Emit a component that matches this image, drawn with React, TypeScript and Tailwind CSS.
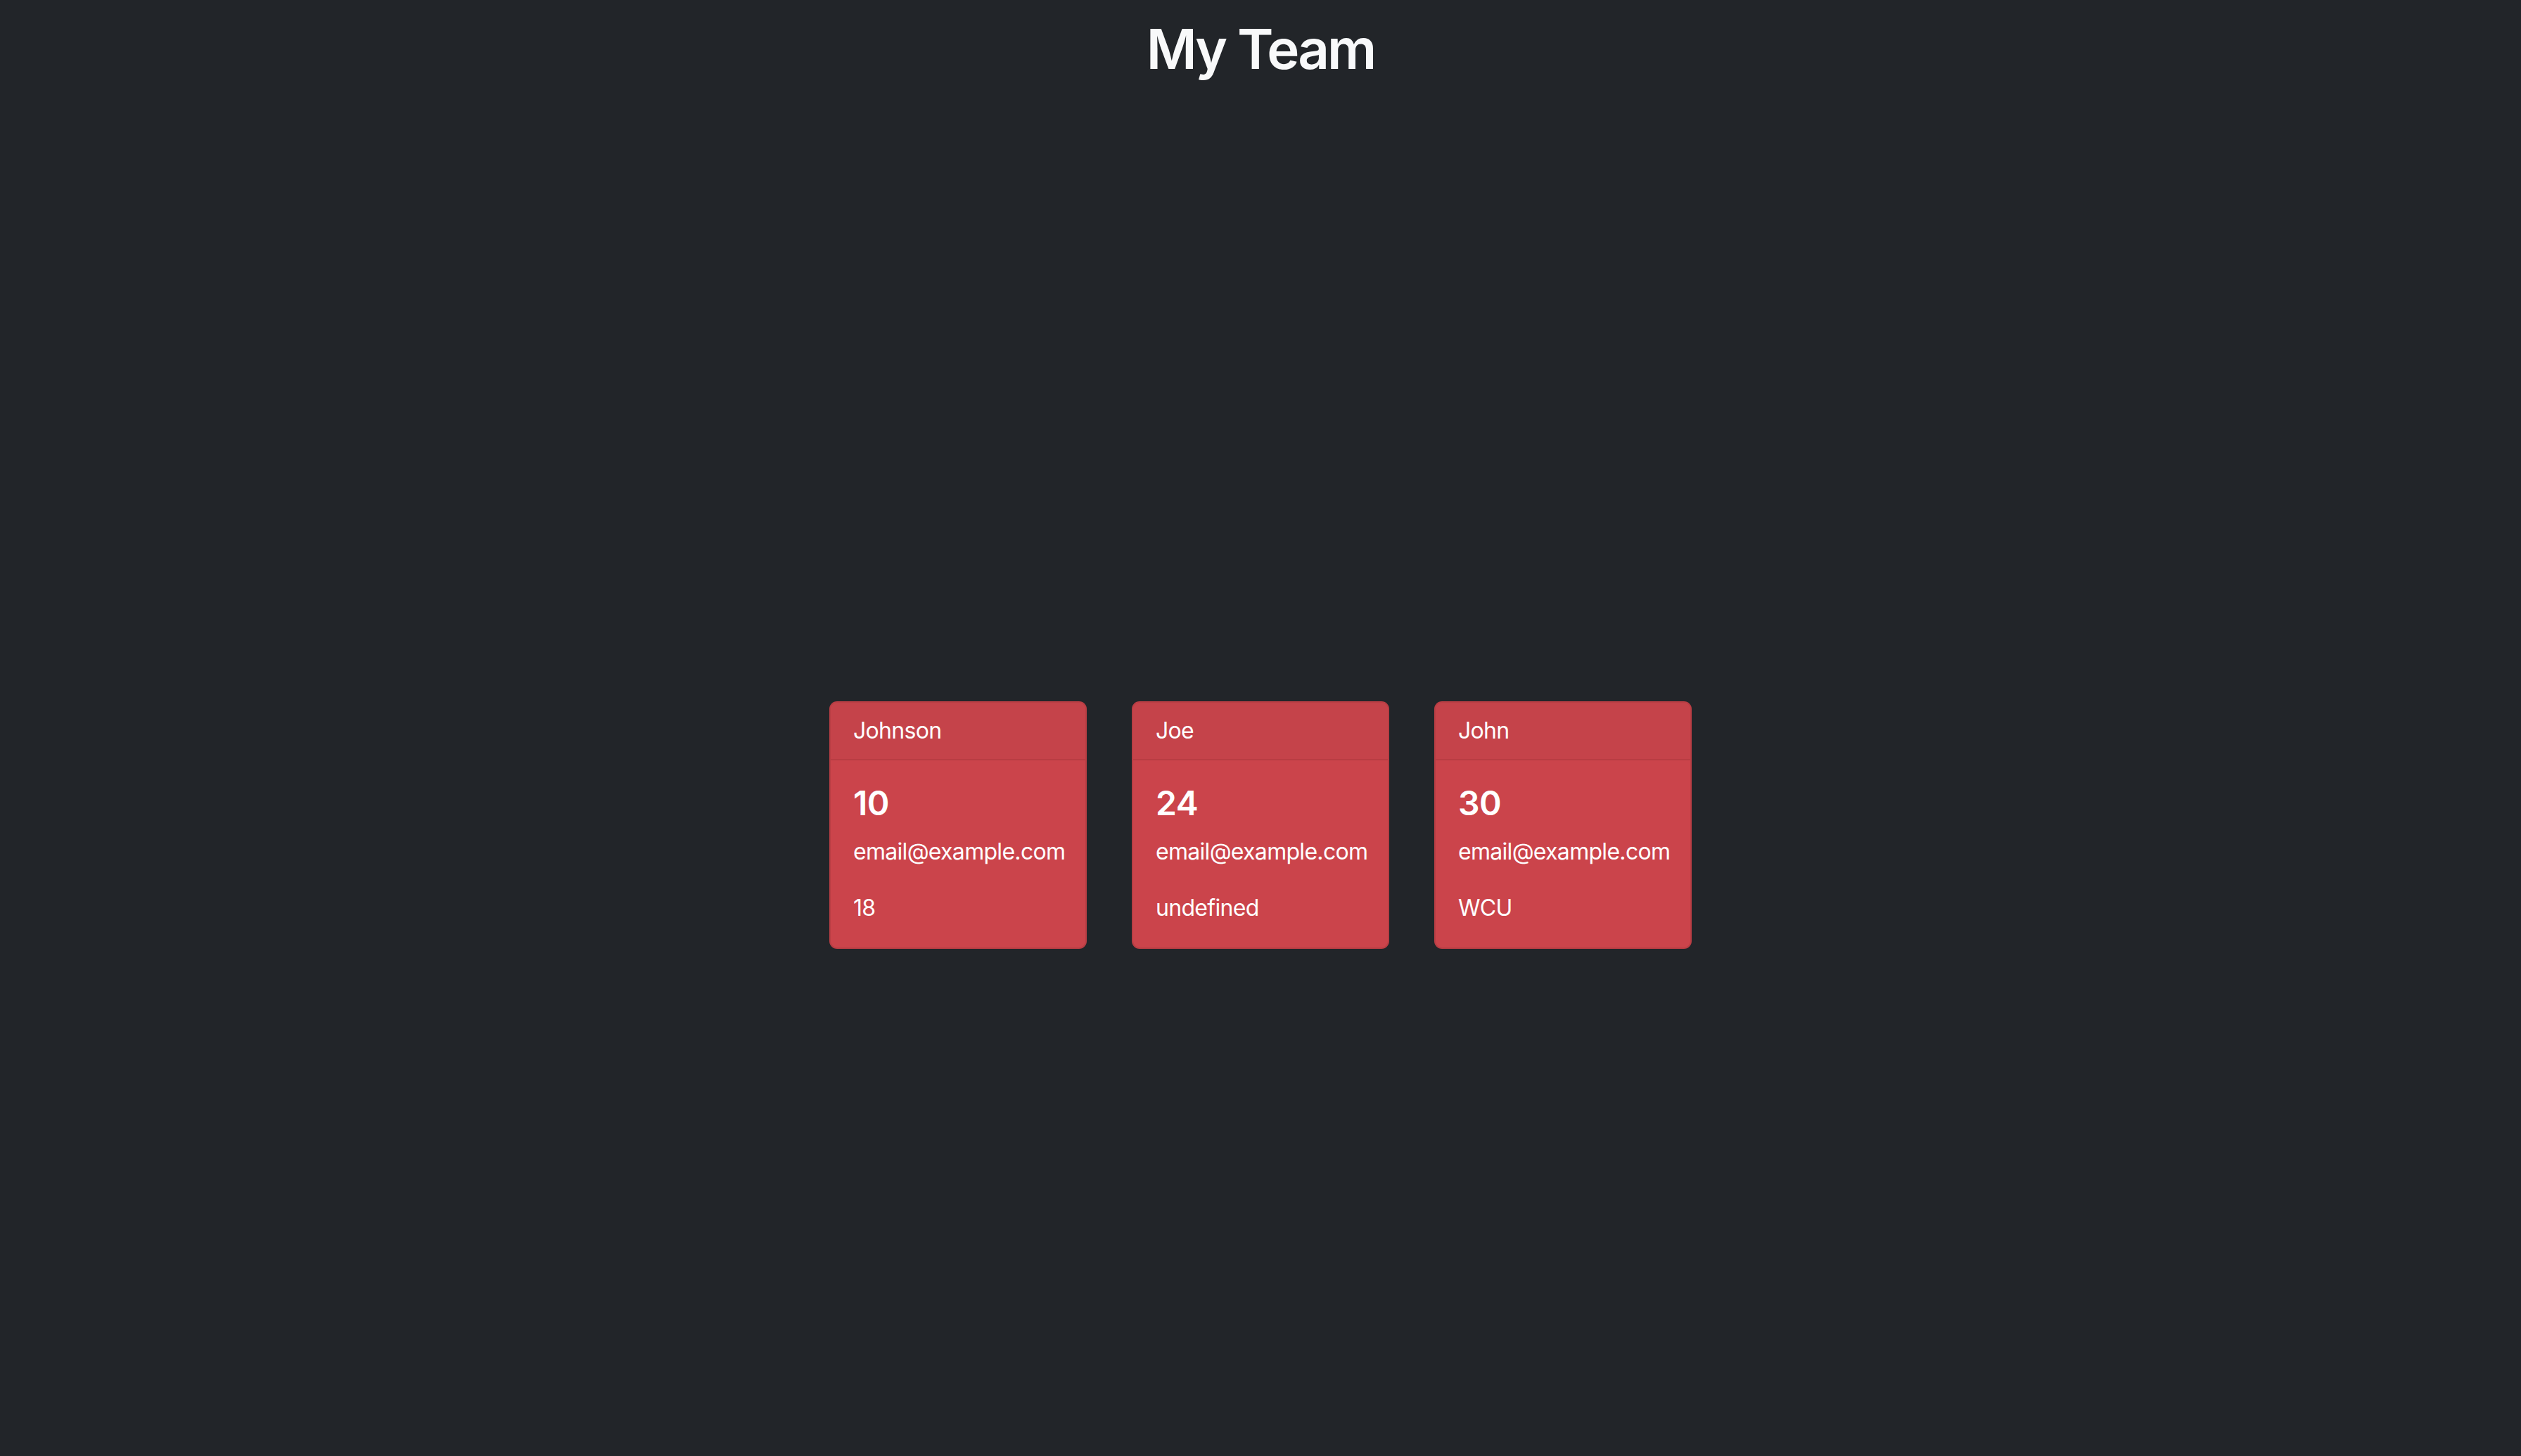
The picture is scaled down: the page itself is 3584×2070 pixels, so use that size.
const TEAM = [
  { id: 1, name: 'Johnson', number: 10, email: 'email@example.com', extra: '18' },
  { id: 2, name: 'Joe', number: 24, email: 'email@example.com', extra: 'undefined' },
  { id: 3, name: 'John', number: 30, email: 'email@example.com', extra: 'WCU' },
]

function MemberCard({ name, number, email, extra }: { name: string; number: number; email: string; extra: string }) {
  return (
    <div className="w-[366px] rounded-[11px] border-2 border-[#b93e44] bg-[#cb444b] text-white overflow-hidden tracking-[-0.7px]">
      <div className="px-[32px] py-[16px] bg-[#c5434a] border-b-2 border-[#b83d43] text-[32px] leading-[48px]">{name}</div>
      <div className="p-[32px]">
        <h4 className="text-[48px] leading-[58px] font-semibold mb-[16px] tracking-[-0.5px]">{number}</h4>
        <p className="text-[32px] leading-[48px] mb-[32px]">{email}</p>
        <p className="text-[32px] leading-[48px]">{extra}</p>
      </div>
    </div>
  )
}

export default function App() {
  return (
    <div className="min-h-[2070px] bg-[#222529] text-[#f8f9fa] font-['Inter','Liberation_Sans',sans-serif]">
      <h1 className="text-center text-[78px] leading-[96px] font-semibold pt-[22px] tracking-[-3px]">My Team</h1>

      <div className="flex justify-center gap-[64px] pt-[879px]">
        {TEAM.map((m) => (
          <MemberCard key={m.id} {...m} />
        ))}
      </div>
    </div>
  )
}
